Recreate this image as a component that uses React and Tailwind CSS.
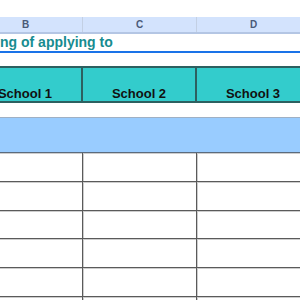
export default function App() {
  const cols = ["B", "C", "D"];
  const rowHeights = [29, 29, 28, 29, 29, 29];
  return (
    <div
      className="w-[300px] h-[300px] overflow-hidden bg-white"
      style={{ fontFamily: '"Liberation Sans", Arial, sans-serif' }}
    >
      <div className="ml-[-31px] w-[342px]">
        {/* top spacer */}
        <div className="h-[17px] bg-white" />
        {/* column letters */}
        <div className="flex h-[17px] bg-[#d3e3fd] border-b-2 border-[#b4c6e4]">
          {cols.map((c) => (
            <div
              key={c}
              className="w-[114px] shrink-0 border-r border-[#c3d0e4] flex items-center justify-center text-[10px] font-bold text-[#4a5a78]"
            >
              {c}
            </div>
          ))}
        </div>
        {/* title row */}
        <div className="h-[19px] border-b-2 border-[#1a73e8] flex items-end">
          <span className="ml-[31px] text-[14px] leading-[17px] font-bold text-[#178c90] whitespace-nowrap">
            ng of applying to
          </span>
        </div>
        <div className="h-[13px]" />
        {/* school header */}
        <div className="flex h-[37px] bg-[#33cccc] border-t-2 border-b-2 border-[#2d6060]">
          {["School 1", "School 2", "School 3"].map((s) => (
            <div
              key={s}
              className="w-[114px] shrink-0 border-r-2 border-[#2d6060] flex items-end justify-center pb-0 text-[13px] font-bold text-[#111] leading-[15px]"
            >
              {s}
            </div>
          ))}
        </div>
        <div className="h-[14px]" />
        {/* section band */}
        <div className="h-[36px] bg-[#99ccff] border-t border-[#9fb0c4] border-b border-b-[#5b6b7d]" />
        {/* empty rows */}
        {rowHeights.map((h, i) => (
          <div
            key={i}
            className="flex border-b border-b-[#5a5a5a] shadow-[inset_0_1px_0_#cdcdcd]"
            style={{ height: h }}
          >
            {cols.map((c) => (
              <div
                key={c}
                className="w-[114px] shrink-0 border-r border-[#5a5a5a] shadow-[1px_0_0_#cdcdcd]"
              />
            ))}
          </div>
        ))}
      </div>
    </div>
  );
}
